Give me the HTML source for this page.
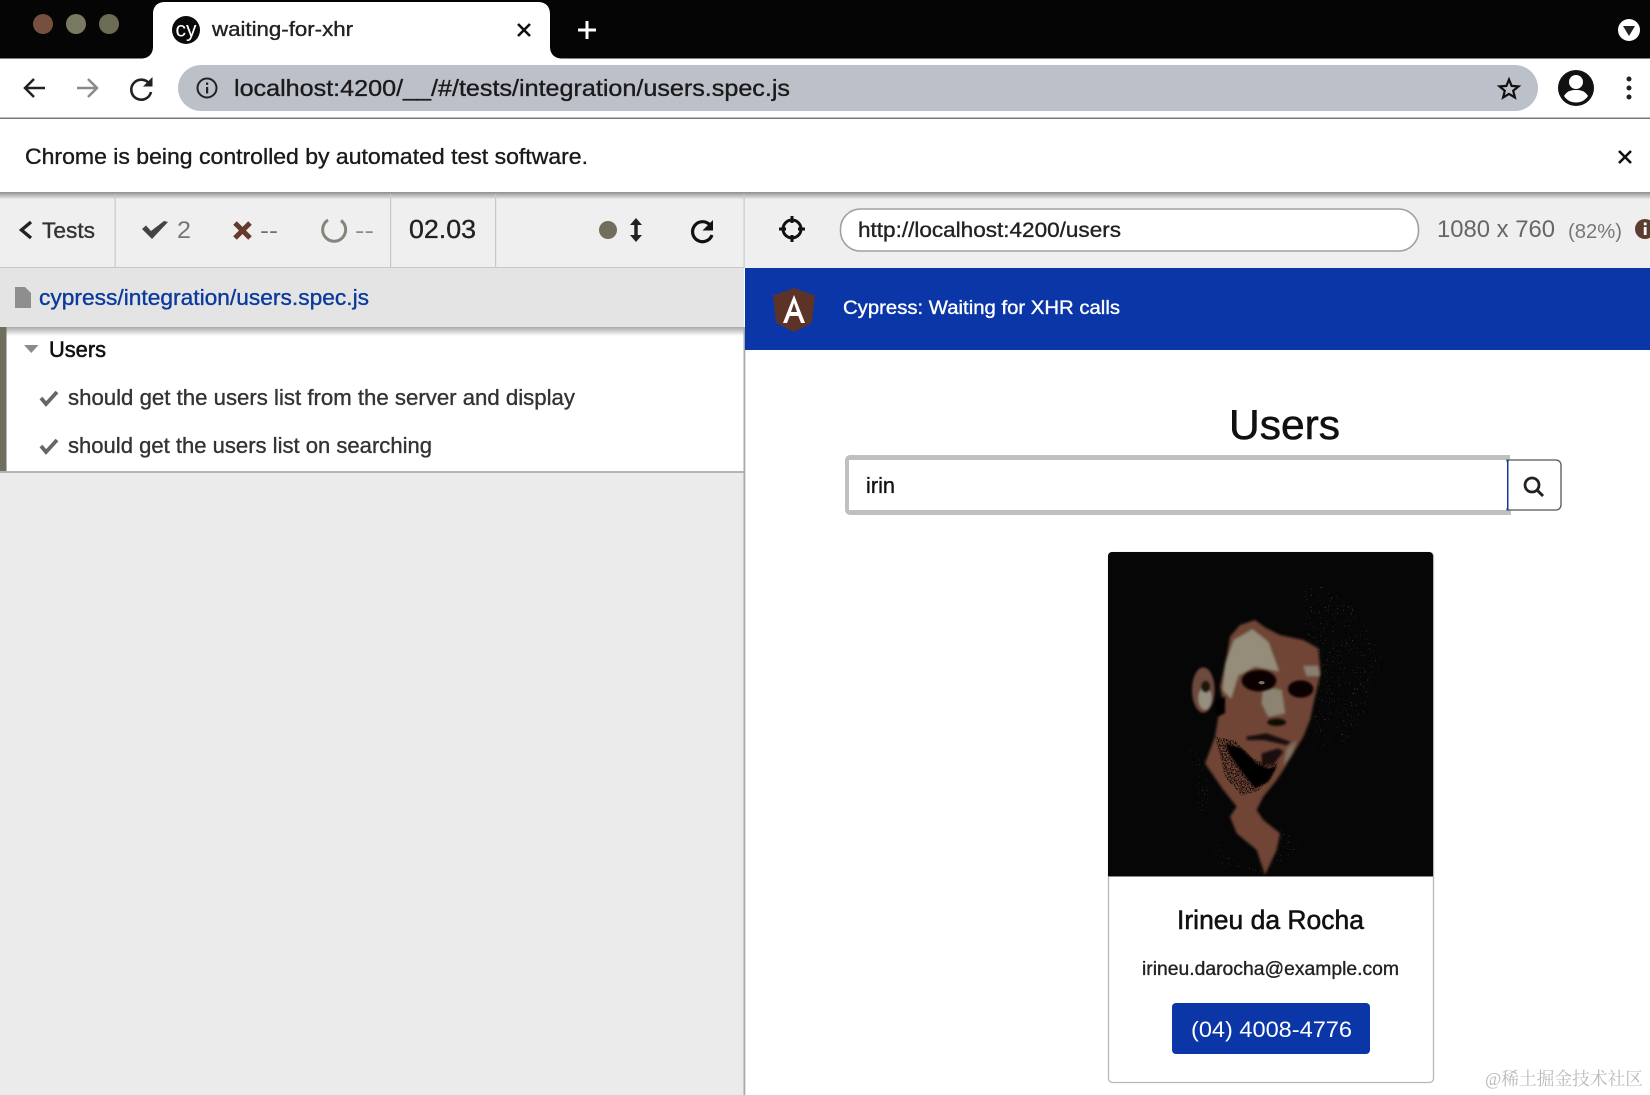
<!DOCTYPE html>
<html><head><meta charset="utf-8"><title>waiting-for-xhr</title>
<style>
html,body{margin:0;padding:0;background:#fff;width:1650px;height:1095px;overflow:hidden}
svg{display:block}
text{font-family:"Liberation Sans","Noto Sans CJK SC",sans-serif}
.w{stroke-width:.35}
.m{stroke-width:.55}
</style></head><body>
<svg width="1650" height="1095" viewBox="0 0 1650 1095" xmlns="http://www.w3.org/2000/svg">
<defs>
<linearGradient id="sh1" x1="0" y1="0" x2="0" y2="1"><stop offset="0" stop-color="#8f8f8f"/><stop offset="1" stop-color="#e8e8e8"/></linearGradient>
<linearGradient id="sh2" x1="0" y1="0" x2="0" y2="1"><stop offset="0" stop-color="#a8a8a8"/><stop offset="1" stop-color="#ffffff"/></linearGradient>
<filter id="soft" x="-10%" y="-10%" width="120%" height="120%"><feGaussianBlur stdDeviation="4"/></filter>
<filter id="softS" x="-20%" y="-20%" width="140%" height="140%"><feGaussianBlur stdDeviation="3.500"/></filter>
<filter id="speck" x="0" y="0" width="100%" height="100%">
<feTurbulence type="fractalNoise" baseFrequency=".22" numOctaves="1" seed="4" result="n"/>
<feColorMatrix in="n" type="matrix" values="0 0 0 0 0 0 0 0 0 0 0 0 0 0 0 9 0 0 0 -6" result="t"/>
<feComposite in="SourceGraphic" in2="t" operator="in"/>
</filter>
<filter id="speckD" x="0" y="0" width="100%" height="100%">
<feTurbulence type="fractalNoise" baseFrequency=".25" numOctaves="1" seed="9" result="n"/>
<feColorMatrix in="n" type="matrix" values="0 0 0 0 0 0 0 0 0 0 0 0 0 0 0 9 0 0 0 -4.200" result="t"/>
<feComposite in="SourceGraphic" in2="t" operator="in"/>
</filter>
<clipPath id="cardImg"><path d="M1108 556a4 4 0 0 1 4-4h317a4 4 0 0 1 4 4v320h-325z"/></clipPath>
</defs>

<!-- tab strip -->
<rect x="0" y="0" width="1650" height="58.500" fill="#050505"/>
<circle cx="43" cy="24" r="10" fill="#75503f"/>
<circle cx="76" cy="24" r="10" fill="#7a7a62"/>
<circle cx="109" cy="24" r="10" fill="#6c6c54"/>
<path d="M141 58.500c8 0 12-5 12-12V14c0-8 5-12 12-12h373c7 0 12 4 12 12v32.500c0 7 4 12 12 12z" fill="#fff"/>
<circle cx="186" cy="30" r="14" fill="#0a0a0a"/>
<text x="175.500" y="36.500" font-size="21" fill="#fff" textLength="21" lengthAdjust="spacingAndGlyphs">cy</text>
<text class="w" stroke="#222" x="212" y="36" font-size="20" fill="#222" textLength="141" lengthAdjust="spacingAndGlyphs">waiting-for-xhr</text>
<path d="M518 24l12 12M530 24l-12 12" stroke="#111" stroke-width="2.600" fill="none"/>
<path d="M587 21v18M578 30h18" stroke="#fff" stroke-width="3" fill="none"/>
<circle cx="1629" cy="30" r="11" fill="#fff"/>
<path d="M1623 26h12l-6 10z" fill="#222"/>

<!-- toolbar -->
<rect x="0" y="58.500" width="1650" height="59" fill="#fff"/>
<rect x="0" y="117.500" width="1650" height="1.500" fill="#777"/>
<path d="M45 88H26M34 79l-9 9 9 9" stroke="#222" stroke-width="2.500" fill="none"/>
<path d="M77 88h20M88 79l9 9-9 9" stroke="#8a8a8a" stroke-width="2.500" fill="none"/>
<path d="M149.500 84a10 10 0 1 0 1.500 8" stroke="#222" stroke-width="2.600" fill="none"/>
<path d="M152.500 77v9.500h-9.500z" fill="#222"/>
<rect x="178" y="65" width="1360" height="46" rx="23" fill="#bcc0c9"/>
<circle cx="207" cy="88" r="9.500" fill="none" stroke="#222" stroke-width="2"/>
<rect x="206" y="87" width="2.200" height="6.500" fill="#222"/><rect x="206" y="82.500" width="2.200" height="2.400" fill="#222"/>
<text class="w" stroke="#1a1a1a" x="234" y="96" font-size="23" fill="#1a1a1a" textLength="556" lengthAdjust="spacingAndGlyphs">localhost:4200/__/#/tests/integration/users.spec.js</text>
<path d="M1509 79.500l2.600 6.400 6.900.5-5.300 4.400 1.700 6.700-5.900-3.600-5.900 3.600 1.700-6.700-5.300-4.400 6.900-.5z" fill="none" stroke="#111" stroke-width="2.200"/>
<circle cx="1576" cy="88" r="18" fill="#111"/>
<circle cx="1576" cy="82" r="7" fill="#fff"/>
<path d="M1564 96c3-5 7-6 12-6s9 1 12 6c-3 4.500-7 6.500-12 6.500s-9-2-12-6.500z" fill="#fff"/>
<circle cx="1629" cy="79" r="2.500" fill="#222"/><circle cx="1629" cy="88" r="2.500" fill="#222"/><circle cx="1629" cy="97" r="2.500" fill="#222"/>

<!-- infobar -->
<rect x="0" y="119" width="1650" height="73" fill="#fff"/>
<text class="w" stroke="#1a1a1a" x="25" y="164" font-size="22" fill="#1a1a1a" textLength="563" lengthAdjust="spacingAndGlyphs">Chrome is being controlled by automated test software.</text>
<path d="M1619 151l12 12M1631 151l-12 12" stroke="#111" stroke-width="2.600" fill="none"/>

<!-- Cypress reporter -->
<rect x="0" y="192" width="1650" height="76" fill="#efefef"/>
<rect x="0" y="192" width="1650" height="7" fill="url(#sh1)"/>
<rect x="0" y="267" width="744" height="1.500" fill="#c8c8c8"/>
<rect x="114.500" y="194" width="1.200" height="74" fill="#c8c8c8"/>
<rect x="390" y="194" width="1.200" height="74" fill="#c8c8c8"/>
<rect x="495" y="194" width="1.200" height="74" fill="#c8c8c8"/>
<rect x="743.500" y="194" width="1.200" height="74" fill="#c8c8c8"/>
<path d="M31 222l-9.500 8 9.500 8" stroke="#222" stroke-width="3.400" fill="none"/>
<text class="w" stroke="#333" x="42" y="238" font-size="22" fill="#333" textLength="53" lengthAdjust="spacingAndGlyphs">Tests</text>
<path d="M142 229l4-3.500 5 5.500 13-10 4 1-16 17z" fill="#444"/>
<text x="177" y="238" font-size="24" fill="#777" textLength="14" lengthAdjust="spacingAndGlyphs">2</text>
<path d="M235 223l15 15M250 223l-15 15" stroke="#653a2b" stroke-width="5" fill="none"/>
<text x="260" y="238" font-size="22" fill="#6f6f6f" textLength="18" lengthAdjust="spacingAndGlyphs">--</text>
<path d="M341 220.500a11.500 11.500 0 1 1-13-.5" fill="none" stroke="#85857c" stroke-width="3"/>
<text x="355" y="238" font-size="22" fill="#8a8a8a" textLength="19" lengthAdjust="spacingAndGlyphs">--</text>
<text class="w" stroke="#222" x="409" y="238" font-size="26" fill="#222" textLength="67" lengthAdjust="spacingAndGlyphs">02.03</text>
<circle cx="608" cy="230" r="9" fill="#6f6f5c"/>
<path d="M636 222v16" stroke="#222" stroke-width="3.500"/><path d="M630 225l6-7 6 7zM630 235l6 7 6-7z" fill="#222"/>
<path d="M710 225a10 10 0 1 0 2 10" stroke="#111" stroke-width="3.200" fill="none"/>
<path d="M713 220v10.500h-10.500z" fill="#111"/>
<circle cx="792" cy="229" r="9" fill="none" stroke="#111" stroke-width="3"/>
<path d="M792 216v7M792 235v7M779 229h7M798 229h7" stroke="#111" stroke-width="3"/>
<rect x="840.500" y="209" width="578" height="42" rx="20" fill="#fff" stroke="#a0a0a0" stroke-width="1.600"/>
<text class="w" stroke="#222" x="858" y="237" font-size="21" fill="#222" textLength="263" lengthAdjust="spacingAndGlyphs">http://localhost:4200/users</text>
<text x="1437" y="237" font-size="24" fill="#666" textLength="118" lengthAdjust="spacingAndGlyphs">1080 x 760</text>
<text x="1568" y="238" font-size="20" fill="#777" textLength="54" lengthAdjust="spacingAndGlyphs">(82%)</text>
<circle cx="1645" cy="229" r="10" fill="#5d3d30"/>
<rect x="1643.800" y="227" width="2.800" height="8" fill="#fff"/><rect x="1643.800" y="222.500" width="2.800" height="2.800" fill="#fff"/>

<!-- left panel -->
<rect x="0" y="268" width="744" height="59" fill="#e4e4e4"/>
<path d="M15 287h10l6 6v15H15z" fill="#8e8e8e"/>
<text class="w" stroke="#0b3a9c" x="39" y="305" font-size="22" fill="#0b3a9c" textLength="330" lengthAdjust="spacingAndGlyphs">cypress/integration/users.spec.js</text>
<rect x="0" y="327" width="744" height="145" fill="#fff"/>
<rect x="0" y="327" width="744" height="9" fill="url(#sh2)"/>
<rect x="0" y="327" width="6.500" height="145" fill="#6f6f5c"/>
<path d="M24 345h14.500l-7.200 8z" fill="#8a8a8a"/>
<text class="m" stroke="#111" x="49" y="357" font-size="22" fill="#111" textLength="57" lengthAdjust="spacingAndGlyphs">Users</text>
<path d="M41 398l5 6 11-12" stroke="#666" stroke-width="3.800" fill="none"/>
<text class="w" stroke="#333" x="68" y="405" font-size="22" fill="#333" textLength="507" lengthAdjust="spacingAndGlyphs">should get the users list from the server and display</text>
<path d="M41 446l5 6 11-12" stroke="#666" stroke-width="3.800" fill="none"/>
<text class="w" stroke="#333" x="68" y="453" font-size="22" fill="#333" textLength="364" lengthAdjust="spacingAndGlyphs">should get the users list on searching</text>
<rect x="0" y="472" width="744" height="623" fill="#ebebeb"/>
<rect x="0" y="471" width="744" height="2" fill="#b4b4b4"/>
<rect x="743.500" y="327" width="1.800" height="768" fill="#a8a8a8"/>

<!-- app -->
<rect x="745" y="268" width="905" height="82" fill="#0b36a8"/>
<path d="M794 288l21 7.500-3.300 27.500L794 332l-17.700-9-3.300-27.500z" fill="#5d3327"/>
<path d="M794 295l-11 28h4l2.700-7h8.600l2.700 7h4zm0 8l3 9h-6z" fill="#fff"/>
<text class="w" stroke="#fff" x="843" y="314" font-size="19" fill="#fff" textLength="277" lengthAdjust="spacingAndGlyphs">Cypress: Waiting for XHR calls</text>
<text class="m" stroke="#111" x="1229" y="439" font-size="42" fill="#111" textLength="111" lengthAdjust="spacingAndGlyphs">Users</text>
<path d="M845 460a5 5 0 0 1 5-5h660v5H849v50h662v5H850a5 5 0 0 1-5-5z" fill="#c0c0c0"/>
<path d="M1507 460h49a5 5 0 0 1 5 5v40a5 5 0 0 1-5 5h-49z" fill="#fff" stroke="#555" stroke-width="1.300"/>
<rect x="849" y="460" width="658" height="50" rx="3" fill="#fff"/>
<rect x="1507" y="460" width="1.500" height="50" fill="#123a9c"/>
<text class="w" stroke="#111" x="866" y="493" font-size="22" fill="#111" textLength="29" lengthAdjust="spacingAndGlyphs">irin</text>
<circle cx="1532" cy="485" r="7" fill="none" stroke="#222" stroke-width="2.800"/>
<path d="M1537 490l6 6" stroke="#222" stroke-width="3"/>

<!-- card -->
<rect x="1108.500" y="552.500" width="325" height="530" rx="4" fill="#fff" stroke="#b8b8b8" stroke-width="1.300"/>
<g clip-path="url(#cardImg)">
<rect x="1108" y="552" width="325" height="325" fill="#060606"/>
<g transform="translate(1090 540) scale(.33333)">
<g filter="url(#speck)" opacity=".55">
<path d="M640 130l110 15 90 130 40 80-30 90-60 150-120 40-20-300z" fill="#8a8272"/>
<path d="M298 630l50 20 10 150-30 30zM365 900l130 110 110-60 25-30-60-70-70 130-120 0z" fill="#9a7a68"/>
</g>
<g filter="url(#soft)">
<path d="M420 290l30-35 45-15 30 22 45 23 70 15 45 25 7 75-17 70-15 70-20 50-30 50-30 50-20 30-40 50-20 40 20 30 50 40-10 50-35 75-25-75-60-50-20-50 20-30-40-50-55-80 30-80 10-60 15-40-10-50 20-90z" fill="#6f4536"/>
<path d="M432 300l55-32 48 38 32 88-72-14-50 26-22 70-25-26 8-80z" fill="#958d7a"/>
<path d="M520 440l55 10 10 70-50 10-20-40z" fill="#8c8471"/>
<path d="M640 378l45 0 5 30-40 0z" fill="#8a7f6e"/>
<path d="M590 625l30-25-15 45-25 30z" fill="#7f6f60"/>
</g>
<g filter="url(#softS)">
<ellipse cx="340" cy="450" rx="34" ry="68" fill="#6e4a3c"/>
<ellipse cx="345" cy="475" rx="20" ry="34" fill="#94907f"/>
<ellipse cx="347" cy="440" rx="14" ry="18" fill="#1e120d"/>
<ellipse cx="507" cy="422" rx="52" ry="32" fill="#070403"/>
<ellipse cx="632" cy="447" rx="38" ry="26" fill="#070403"/>
<ellipse cx="560" cy="547" rx="28" ry="11" fill="#0d0705"/>
<path d="M470 590l60-10 70 25-10 10-70-15-50 0z" fill="#140b08"/>
<path d="M405 610l50 15 45 45 35 15 25-5-25 45-40 20-40-50-35-50z" fill="#060403"/>
<path d="M515 640l50-15 15 10-30 40-35 0z" fill="#1a0f0b"/>
<path d="M375 480l30-10 0 50-25 10z" fill="#060403"/>
</g>
<ellipse cx="515" cy="428" rx="9" ry="5" fill="#8a6a58"/>
<g filter="url(#speckD)" opacity=".8">
<path d="M375 590l60 12 50 50 50 25 30-10-20 45-40 40-50 15-50-55z" fill="#060403"/>
</g>
</g>
</g>
<rect x="1108" y="876" width="325" height="1" fill="#888"/>
<text class="m" stroke="#111" x="1177" y="929" font-size="27" fill="#111" textLength="187" lengthAdjust="spacingAndGlyphs">Irineu da Rocha</text>
<text class="w" stroke="#222" x="1142" y="975" font-size="19" fill="#222" textLength="257" lengthAdjust="spacingAndGlyphs">irineu.darocha@example.com</text>
<rect x="1172" y="1003" width="198" height="51" rx="4" fill="#0b36a8"/>
<text x="1191" y="1037" font-size="22" fill="#fff" textLength="161" lengthAdjust="spacingAndGlyphs">(04) 4008-4776</text>
<text x="1485" y="1085" font-size="18" fill="#bbb" textLength="158" lengthAdjust="spacingAndGlyphs" style="font-family:'Liberation Serif','Noto Serif CJK SC',serif">@稀土掘金技术社区</text>
</svg>
</body></html>
